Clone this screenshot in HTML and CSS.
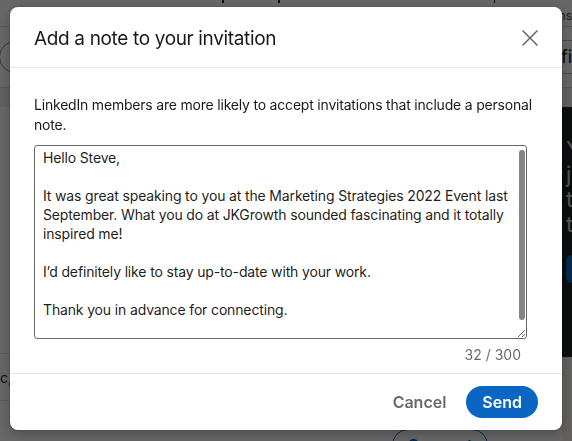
FILE: index.html
```html
<!DOCTYPE html>
<html lang="en">
<head>
<meta charset="utf-8">
<title>Add a note to your invitation</title>
<link rel="stylesheet" href="styles.css">
</head>
<body>
<div class="page">
  <header class="topnav">
    <span class="navicon n1"></span>
    <span class="navicon n2"></span>
    <span class="navicon n3"></span>
    <span class="nav-label">Notifications</span>
  </header>
  <div class="subbar">
    <span class="pill-search"></span>
    <span class="filter-box">filters</span>
  </div>
  <div class="main">
    <section class="feed">
      <div class="feed-spacer"></div>
      <div class="person-row"><span class="person-meta">Inc, New York</span></div>
      <div class="connect-row"><button class="connect">Connect</button></div>
    </section>
    <aside class="promo">
      <p class="promo-text">You<br>job<br>the<br>top</p>
      <span class="promo-btn"></span>
    </aside>
  </div>
</div>

<div class="overlay">
  <div class="modal" role="dialog" aria-labelledby="modal-title">
    <header class="modal-header">
      <h2 id="modal-title">Add a note to your invitation</h2>
      <button class="close" aria-label="Dismiss">
        <svg viewBox="0 0 24 24" aria-hidden="true"><path d="M13.06 12L20 18.94 18.94 20 12 13.06 5.06 20 4 18.94 10.94 12 4 5.06 5.06 4 12 10.94 18.94 4 20 5.06z"/></svg>
      </button>
    </header>
    <div class="modal-body">
      <p class="hint">LinkedIn members are more likely to accept invitations that include a personal note.</p>
      <div class="note-wrap">
        <textarea class="note" aria-label="Personal note">Hello Steve,

It was great speaking to you at the Marketing Strategies 2022 Event last September. What you do at JKGrowth sounded fascinating and it totally inspired me!

I’d definitely like to stay up-to-date with your work.

Thank you in advance for connecting.
</textarea>
        <span class="note-thumb" aria-hidden="true"></span>
      </div>
      <div class="counter">32 / 300</div>
    </div>
    <footer class="modal-footer">
      <button class="btn-cancel">Cancel</button>
      <button class="btn-send">Send</button>
    </footer>
  </div>
</div>
</body>
</html>
```

FILE: styles.css
```css
html, body {
  margin: 0;
  padding: 0;
}

body {
  width: 572px;
  height: 441px;
  overflow: hidden;
  font-family: Inter, "Noto Sans", "Liberation Sans", sans-serif;
  background: #f4f2ee;
}

/* ---------- page behind the dialog ---------- */
.page {
  width: 572px;
  height: 441px;
  overflow: hidden;
}

.topnav {
  height: 27px;
  background: #fff;
  border-bottom: 1px solid #d9d9d9;
  box-sizing: border-box;
  display: flex;
  align-items: flex-start;
  overflow: hidden;
}

.navicon {
  height: 3px;
  width: 16px;
  background: linear-gradient(90deg, #222 0 6px, transparent 6px 9px, #222 9px 15px, transparent 15px);
}
.n1 { margin-left: 222px; }
.n2 { margin-left: 54px; width: 18px; }
.n3 { margin-left: 214px; width: 4px; background: #222; border-radius: 0 0 2px 2px; }

.nav-label {
  margin-left: 6px;
  margin-top: 9px;
  font-size: 12px;
  line-height: 14px;
  color: #444;
  white-space: nowrap;
}

.subbar {
  height: 60px;
  background: #fff;
  border-bottom: 1px solid #d9d9d9;
  display: flex;
  align-items: center;
  justify-content: space-between;
}

.pill-search {
  width: 80px;
  height: 30px;
  margin-left: -1px;
  border: 1px solid #888;
  border-radius: 16px;
}

.filter-box {
  height: 32px;
  width: 40px;
  margin-right: -30px;
  border: 1px solid #bbb;
  border-radius: 4px;
  font-size: 18px;
  line-height: 32px;
  padding-left: 2px;
  color: #111;
  overflow: hidden;
}

.main {
  display: grid;
  grid-template-columns: 562px 220px;
  padding-top: 19px;
}

.feed {
  background: #fff;
  display: flex;
  flex-direction: column;
}

.feed-spacer {
  height: 246px;
  border-bottom: 1px solid #e0e0e0;
}

.person-row {
  height: 46px;
  border-bottom: 1px solid #e0e0e0;
  display: flex;
  align-items: center;
  overflow: hidden;
}

.person-meta {
  margin-left: -12px;
  font-size: 14px;
  color: #222;
  white-space: nowrap;
}

.connect-row {
  padding: 28px 0 0 392px;
}

.connect {
  width: 96px;
  height: 32px;
  border: 1px solid #0a66c2;
  border-radius: 16px;
  background: #fff;
  color: #0a66c2;
  font: 600 16px Inter, "Noto Sans", sans-serif;
}

.promo {
  height: 250px;
  background: #1d2226;
  padding: 30px 0 0 4px;
  box-sizing: border-box;
}

.promo-text {
  margin: 0;
  font-size: 22px;
  line-height: 25px;
  color: #d6d6d6;
}

.promo-btn {
  display: block;
  margin-top: 18px;
  width: 60px;
  height: 28px;
  background: #0a66c2;
  border-radius: 6px;
}

/* ---------- dialog ---------- */
.overlay {
  position: fixed;
  inset: 0;
  background: rgba(0, 0, 0, 0.6);
  display: flex;
  justify-content: center;
  align-items: flex-start;
  padding-top: 7px;
}

.modal {
  width: 552px;
  height: 423px;
  background: #fff;
  border-radius: 8px;
  box-shadow: 0 0 0 1px rgba(0, 0, 0, 0.08), 0 4px 12px rgba(0, 0, 0, 0.25);
  display: flex;
  flex-direction: column;
  overflow: hidden;
}

.modal-header {
  height: 61px;
  box-sizing: border-box;
  border-bottom: 1px solid #e8e8e8;
  display: flex;
  align-items: center;
  justify-content: space-between;
  padding: 2px 16px 0 24px;
}

.modal-header h2 {
  margin: 0;
  font-size: 19px;
  font-weight: 400;
  letter-spacing: -0.35px;
  color: rgba(0, 0, 0, 0.9);
}

.close {
  width: 32px;
  height: 32px;
  padding: 0;
  border: 0;
  background: none;
  display: grid;
  place-items: center;
  color: rgba(0, 0, 0, 0.6);
}

.close svg {
  width: 24px;
  height: 24px;
  fill: currentColor;
}

.modal-body {
  padding: 27px 24px 8px;
}

.hint {
  margin: 0;
  font-size: 14px;
  line-height: 20px;
  letter-spacing: -0.2px;
  color: rgba(0, 0, 0, 0.9);
}

.note-wrap {
  position: relative;
  width: 493px;
  margin-top: 10px;
}

.note {
  display: block;
  box-sizing: border-box;
  width: 493px;
  height: 194px;
  margin: 0;
  padding: 2px 10px 3px 8px;
  border: 1px solid rgba(0, 0, 0, 0.6);
  border-radius: 4px;
  font: 14px/19px Inter, "Noto Sans", sans-serif;
  letter-spacing: -0.15px;
  color: rgba(0, 0, 0, 0.9);
  background: #fff;
  resize: vertical;
  overflow-y: auto;
  scrollbar-width: none;
  outline: none;
}

/* macOS overlay scrollbar thumb shown over the textarea */
.note-thumb {
  position: absolute;
  top: 5px;
  right: 2px;
  width: 6px;
  height: 170px;
  border-radius: 3px;
  background: #858585;
  pointer-events: none;
}

.counter {
  width: 493px;
  box-sizing: border-box;
  padding-right: 6px;
  margin-top: 6px;
  text-align: right;
  font-size: 14px;
  line-height: 20px;
  color: rgba(0, 0, 0, 0.6);
}

.modal-footer {
  border-top: 1px solid #e8e8e8;
  padding: 12px 24px;
  display: flex;
  justify-content: flex-end;
  gap: 8px;
}

.btn-cancel,
.btn-send {
  height: 32px;
  border: 0;
  border-radius: 16px;
  font: 600 16px Inter, "Noto Sans", sans-serif;
}

.btn-cancel {
  padding: 0 12px;
  background: none;
  color: rgba(0, 0, 0, 0.6);
}

.btn-send {
  padding: 0 16px;
  background: #0a66c2;
  color: #fff;
}
```
